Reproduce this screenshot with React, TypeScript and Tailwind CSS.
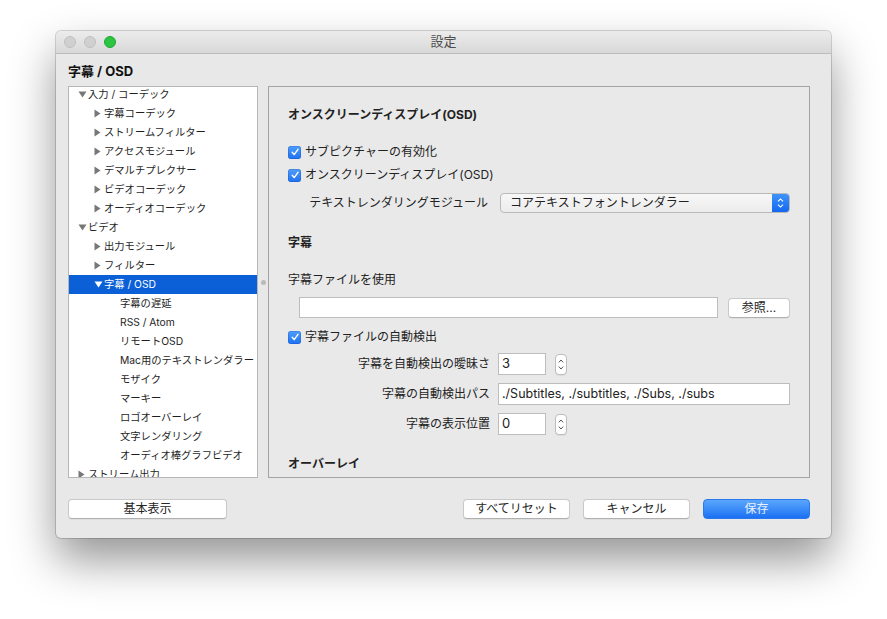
import React from 'react';

type TreeRow = {
  label: string;
  level: 0 | 1 | 2;
  arrow?: 'down' | 'right';
  selected?: boolean;
};

const TREE: TreeRow[] = [
  { label: '入力 / コーデック', level: 0, arrow: 'down' },
  { label: '字幕コーデック', level: 1, arrow: 'right' },
  { label: 'ストリームフィルター', level: 1, arrow: 'right' },
  { label: 'アクセスモジュール', level: 1, arrow: 'right' },
  { label: 'デマルチプレクサー', level: 1, arrow: 'right' },
  { label: 'ビデオコーデック', level: 1, arrow: 'right' },
  { label: 'オーディオコーデック', level: 1, arrow: 'right' },
  { label: 'ビデオ', level: 0, arrow: 'down' },
  { label: '出力モジュール', level: 1, arrow: 'right' },
  { label: 'フィルター', level: 1, arrow: 'right' },
  { label: '字幕 / OSD', level: 1, arrow: 'down', selected: true },
  { label: '字幕の遅延', level: 2 },
  { label: 'RSS / Atom', level: 2 },
  { label: 'リモートOSD', level: 2 },
  { label: 'Mac用のテキストレンダラー', level: 2 },
  { label: 'モザイク', level: 2 },
  { label: 'マーキー', level: 2 },
  { label: 'ロゴオーバーレイ', level: 2 },
  { label: '文字レンダリング', level: 2 },
  { label: 'オーディオ棒グラフビデオ', level: 2 },
  { label: 'ストリーム出力', level: 0, arrow: 'right' },
];

// インデント（レベルごと）
const INDENT = {
  0: 'pl-[9px]',
  1: 'pl-[25px]',
  2: 'pl-[41px]',
};

function Arrow({ dir, color }: { dir?: 'down' | 'right'; color: string }) {
  if (dir === 'down') {
    return (
      <svg width="9" height="7" viewBox="0 0 9 7">
        <path d="M0.5 0.5 H8.5 L4.5 6.5 Z" fill={color} />
      </svg>
    );
  }
  if (dir === 'right') {
    return (
      <svg width="7" height="9" viewBox="0 0 7 9">
        <path d="M0.5 0.5 V8.5 L6.5 4.5 Z" fill={color} />
      </svg>
    );
  }
  return null;
}

function CheckBox() {
  return (
    <span className="flex h-[13px] w-[13px] shrink-0 items-center justify-center rounded-[3px] bg-linear-to-b from-[#4f9dfb] to-[#1f70f2] shadow-[inset_0_0_0_0.5px_rgba(0,40,120,0.35)]">
      <svg width="10" height="10" viewBox="0 0 10 10">
        <path d="M2.2 5.3 L4.2 7.6 L8 2.3" fill="none" stroke="white" strokeWidth="1.4" strokeLinecap="round" strokeLinejoin="round" />
      </svg>
    </span>
  );
}

function Stepper() {
  return (
    <div className="ml-[9px] flex h-[21px] w-[12px] flex-col items-center justify-center gap-[3px] rounded-[4px] border border-[#bdbdbd] bg-white shadow-[0_1px_0_rgba(0,0,0,0.05)]">
      <svg width="6" height="4" viewBox="0 0 6 4">
        <path d="M0.8 3.4 L3 1 L5.2 3.4" fill="none" stroke="#555" strokeWidth="1" />
      </svg>
      <svg width="6" height="4" viewBox="0 0 6 4">
        <path d="M0.8 0.6 L3 3 L5.2 0.6" fill="none" stroke="#555" strokeWidth="1" />
      </svg>
    </div>
  );
}

function Button({ label, className = '' }: { label: string; className?: string }) {
  return (
    <button className={`flex h-[20px] items-center justify-center rounded-[4px] border border-[#c9c9c9] border-b-[#b0b0b0] bg-white text-[12px] text-[#262626] shadow-[0_1px_0_rgba(0,0,0,0.04)] ${className}`}>
      {label}
    </button>
  );
}

export default function App() {
  return (
    <div className="h-[619px] w-[887px] overflow-hidden bg-white pl-[56px] pt-[31px] font-[family-name:Inter,'Noto_Sans_CJK_JP',sans-serif] text-[#222]">
      <div className="flex h-[507px] w-[775px] flex-col rounded-[5px] bg-[#e8e8e8] shadow-[0_22px_45px_rgba(0,0,0,0.42),0_0_0_1px_rgba(0,0,0,0.16)]">
        {/* タイトルバー */}
        <div className="relative flex h-[23px] shrink-0 items-center rounded-t-[5px] border-b border-[#bcbcbc] bg-linear-to-b from-[#ececec] to-[#d8d8d8]">
          <div className="flex items-center gap-[8px] pl-[8px]">
            <span className="h-[12px] w-[12px] rounded-full border border-[#c0c0c0] bg-[#d0d0d0]" />
            <span className="h-[12px] w-[12px] rounded-full border border-[#c0c0c0] bg-[#d0d0d0]" />
            <span className="h-[12px] w-[12px] rounded-full border border-[#21a833] bg-[#2cc440]" />
          </div>
          <span className="absolute left-0 right-0 text-center text-[13px] text-[#4d4d4d]">設定</span>
        </div>

        <div className="mt-[9px] h-[16px] pl-[12px] text-[13px] font-bold leading-[16px] text-[#111]">字幕 / OSD</div>

        <div className="mt-[7px] flex h-[392px] pl-[12px]">
          {/* ツリー */}
          <div className="h-full w-[190px] overflow-hidden border border-[#b6b6b6] bg-white text-[10.3px] text-[#1e1e1e]">
            <div className="-mt-[2px]">
              {TREE.map((row) => (
                <div
                  key={row.label}
                  className={`flex h-[19px] items-center ${INDENT[row.level]} ${row.selected ? 'bg-[#0b5fd7] text-white' : ''}`}
                >
                  <span className="flex w-[10px] shrink-0 items-center">
                    <Arrow dir={row.arrow} color={row.selected ? '#ffffff' : '#777777'} />
                  </span>
                  <span className="whitespace-nowrap">{row.label}</span>
                </div>
              ))}
            </div>
          </div>

          {/* スプリッター */}
          <div className="flex w-[10px] items-center justify-center">
            <span className="h-[5px] w-[5px] rounded-full bg-[#bababa]" />
          </div>

          {/* 右パネル */}
          <div className="h-full w-[542px] overflow-hidden border border-[#a3a3a3] bg-[#e9e9e9] pl-[19px] pr-[19px] text-[12px]">
            <div className="mt-[20px] h-[16px] font-bold leading-[16px]">オンスクリーンディスプレイ(OSD)</div>

            <div className="mt-[20px] flex h-[18px] items-center gap-[4px]">
              <CheckBox />
              <span>サブピクチャーの有効化</span>
            </div>
            <div className="mt-[5px] flex h-[18px] items-center gap-[4px]">
              <CheckBox />
              <span>オンスクリーンディスプレイ(OSD)</span>
            </div>

            <div className="mt-[9px] flex h-[20px] items-center">
              <span className="w-[200px] text-right">テキストレンダリングモジュール</span>
              <div className="ml-[12px] flex h-[20px] w-[290px] items-center overflow-hidden rounded-[4px] border border-[#b9b9b9] bg-linear-to-b from-[#f7f7f7] to-[#ececec]">
                <span className="flex-1 pl-[9px]">コアテキストフォントレンダラー</span>
                <div className="flex h-full w-[17px] flex-col items-center justify-center gap-[2px] bg-linear-to-b from-[#3f93fb] to-[#1467f0]">
                  <svg width="7" height="4" viewBox="0 0 7 4">
                    <path d="M1 3.3 L3.5 0.9 L6 3.3" fill="none" stroke="white" strokeWidth="1.1" />
                  </svg>
                  <svg width="7" height="4" viewBox="0 0 7 4">
                    <path d="M1 0.7 L3.5 3.1 L6 0.7" fill="none" stroke="white" strokeWidth="1.1" />
                  </svg>
                </div>
              </div>
            </div>

            <div className="mt-[22px] h-[16px] font-bold leading-[16px]">字幕</div>

            <div className="mt-[21px] h-[16px] leading-[16px]">字幕ファイルを使用</div>

            <div className="mt-[9px] flex h-[21px] items-center">
              <div className="ml-[11px] h-[21px] w-[419px] border border-[#bdbdbd] bg-white" />
              <Button label="参照..." className="ml-[10px] w-[62px]" />
            </div>

            <div className="mt-[10px] flex h-[18px] items-center gap-[4px]">
              <CheckBox />
              <span>字幕ファイルの自動検出</span>
            </div>

            <div className="mt-[7px] flex h-[22px] items-center">
              <span className="w-[202px] text-right">字幕を自動検出の曖昧さ</span>
              <div className="ml-[8px] flex h-[22px] w-[48px] items-center border border-[#bdbdbd] bg-white pl-[3px] text-[13px]">3</div>
              <Stepper />
            </div>

            <div className="mt-[8px] flex h-[22px] items-center">
              <span className="w-[202px] text-right">字幕の自動検出パス</span>
              <div className="ml-[8px] flex h-[22px] w-[292px] items-center border border-[#bdbdbd] bg-white pl-[3px] text-[12.5px]">
                ./Subtitles, ./subtitles, ./Subs, ./subs
              </div>
            </div>

            <div className="mt-[8px] flex h-[22px] items-center">
              <span className="w-[202px] text-right">字幕の表示位置</span>
              <div className="ml-[8px] flex h-[22px] w-[48px] items-center border border-[#bdbdbd] bg-white pl-[3px] text-[13px]">0</div>
              <Stepper />
            </div>

            <div className="mt-[21px] h-[16px] font-bold leading-[16px]">オーバーレイ</div>
          </div>
        </div>

        {/* 下部ボタン */}
        <div className="mt-[21px] flex pl-[12px] pr-[21px]">
          <Button label="基本表示" className="w-[159px]" />
          <div className="ml-auto flex gap-[13px]">
            <Button label="すべてリセット" className="w-[107px]" />
            <Button label="キャンセル" className="w-[107px]" />
            <button className="flex h-[20px] w-[107px] items-center justify-center rounded-[4px] border border-[#2a78ee] bg-linear-to-b from-[#5aa6fc] to-[#1a70f3] text-[12px] text-[#e8f0ff]">
              保存
            </button>
          </div>
        </div>
      </div>
    </div>
  );
}
